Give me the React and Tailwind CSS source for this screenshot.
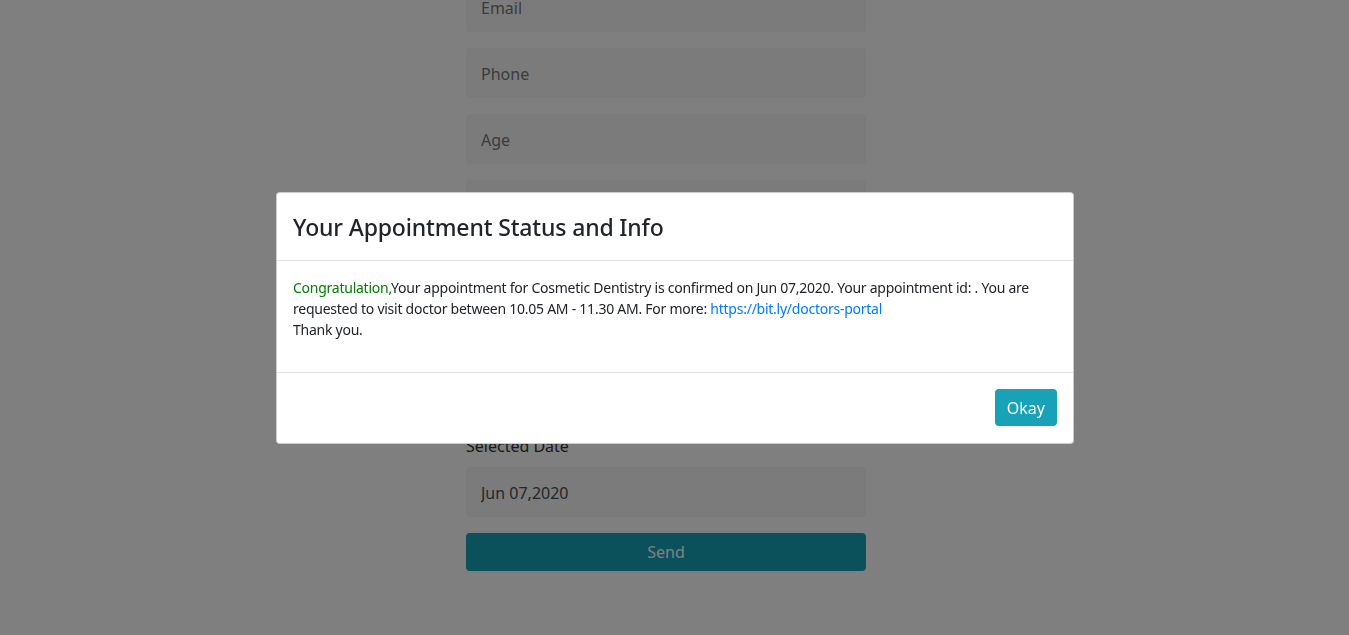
import React from 'react';

const fields = ['Email', 'Phone', 'Age', 'Weight', 'Gender', 'Address', 'Doctor'];

const App = () => {
  return (
    <div className="relative h-[635px] overflow-hidden bg-white pr-[17px]" style={{ fontFamily: '"Noto Sans", "Open Sans", sans-serif' }}>
      {/* Form behind the modal */}
      <div className="mx-auto w-[400px] -mt-[18px] flex flex-col gap-4">
        {fields.map((f) => (
          <input
            key={f}
            type="text"
            placeholder={f}
            className="h-[50px] w-full rounded bg-[#f6f6f6] px-[15px] pt-[2px] text-base text-[#495057] placeholder:text-[#767676] focus:outline-none"
          />
        ))}
        <div className="-mt-[10px]">
          <label className="block text-base leading-6 text-[#333]">Selected Date</label>
          <input
            type="text"
            defaultValue="Jun 07,2020"
            className="mt-[9px] h-[50px] w-full rounded bg-[#f6f6f6] px-[15px] pt-[2px] text-base text-[#495057] focus:outline-none"
          />
        </div>
        <button className="h-[38px] w-full rounded bg-[#17a2b8] text-base text-white">Send</button>
      </div>

      {/* Backdrop */}
      <div className="fixed inset-0 bg-black/50" />

      {/* Modal */}
      <div className="fixed left-[276px] top-[192px] w-[798px] rounded border border-black/20 bg-white text-[#212529]">
        <div className="border-b border-[#dee2e6] px-4 pt-[19px] pb-[18px]">
          <h4 className="text-[23px] font-medium leading-[30px] tracking-[-0.15px]">Your Appointment Status and Info</h4>
        </div>
        <div className="px-4 pt-[16px] pb-[32px] text-[14px] leading-[21px] tracking-[-0.25px]">
          <p>
            <span className="text-[#008000]">Congratulation,</span>Your appointment for Cosmetic Dentistry is confirmed on Jun 07,2020. Your appointment id: . You are requested to visit doctor between 10.05 AM - 11.30 AM. For more:{' '}
            <a href="#" className="text-[#007bff]">https://bit.ly/doctors-portal</a>
          </p>
          <p>Thank you.</p>
        </div>
        <div className="flex justify-end border-t border-[#dee2e6] px-4 pt-4 pb-[17px]">
          <button className="h-[37px] rounded bg-[#17a2b8] px-3 text-base text-white">Okay</button>
        </div>
      </div>
    </div>
  );
};

export default App;
